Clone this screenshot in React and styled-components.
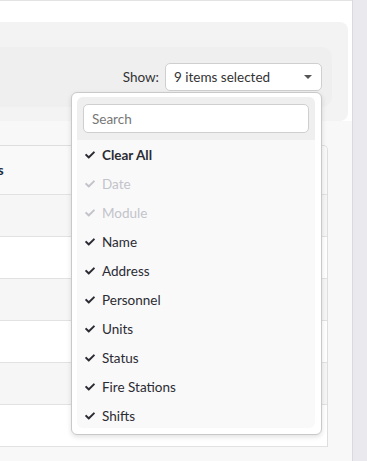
import React from 'react'
import styled, { createGlobalStyle } from 'styled-components'
import { FaCheck } from 'react-icons/fa'

const GlobalStyle = createGlobalStyle`
    html, body {
        margin: 0;
        padding: 0;
        background: #f8f8f8;
        font-family: Lato, "Open Sans", sans-serif;
        overflow: hidden;
    }
`

const Frame = styled.div`
    display: flex;
    height: 461px;
`

const Main = styled.div`
    flex: 1;
    display: flex;
    flex-direction: column;
    min-width: 0;
    border-top: 1px solid #e3e3e3;
`

const Scrollbar = styled.div`
    width: 14px;
    background: #e9e9ee;
    border-left: 1px solid #dadade;
`

const TopCard = styled.div`
    background: #fff;
    padding: 21px 4px 0 0;
`

const FilterPanel = styled.div`
    background: #f3f3f3;
    border-radius: 0 8px 8px 0;
    padding: 25px 16px 14px 0;
`

const Toolbar = styled.div`
    height: 60px;
    background: #efefef;
    border-radius: 0 10px 10px 0;
    display: flex;
    align-items: center;
    justify-content: flex-end;
    gap: 6px;
    padding-right: 10px;
`

const Label = styled.span`
    font-size: 13.5px;
    color: #333;
`

const SelectWrap = styled.div`
    position: relative;
`

const SelectBox = styled.div`
    box-sizing: border-box;
    width: 157px;
    height: 28px;
    background: #fff;
    border: 1px solid #cfcfcf;
    border-radius: 5px;
    display: flex;
    align-items: center;
    justify-content: space-between;
    padding: 0 9px 0 8px;
    font-size: 13.5px;
    color: #333;
`

const Caret = styled.span`
    width: 0;
    height: 0;
    border-left: 4px solid transparent;
    border-right: 4px solid transparent;
    border-top: 4px solid #555;
`

const Menu = styled.div`
    position: absolute;
    top: calc(100% + 1px);
    right: 0;
    width: 251px;
    box-sizing: border-box;
    background: #fff;
    border: 1px solid #c9c9c9;
    border-radius: 6px;
    box-shadow: 0 2px 5px rgba(0, 0, 0, 0.12);
    padding: 4px 6px 6px 5px;
    z-index: 10;
`

const MenuInner = styled.div`
    height: 331px;
    background: #f9f9f9;
    border-radius: 6px;
    overflow: hidden;
`

const SearchArea = styled.div`
    background: #efefef;
    padding: 7px 6px;
`

const SearchInput = styled.input`
    display: block;
    box-sizing: border-box;
    width: 100%;
    height: 29px;
    border: 1px solid #cfcfcf;
    border-radius: 5px;
    padding: 0 8px;
    font-family: Lato, sans-serif;
    font-size: 13.5px;
    color: #333;
    outline: none;
    &::placeholder {
        color: #777;
    }
`

const Item = styled.div`
    height: 29px;
    display: flex;
    align-items: center;
    gap: 7px;
    padding-left: 8px;
    font-size: 13.5px;
    font-weight: ${props => props.bold ? 700 : 400};
    color: ${props => props.disabled ? '#c3c3cb' : '#2b2b33'};
    svg {
        width: 10px;
        height: 10px;
        flex: none;
    }
`

const Content = styled.div`
    padding: 24px 24px 0 0;
    overflow: hidden;
`

const Table = styled.div`
    margin-left: -37px;
    border: 1px solid #dedede;
    border-bottom: none;
    border-radius: 5px 5px 0 0;
    overflow: hidden;
`

const Row = styled.div`
    height: ${props => props.head ? '48px' : '41px'};
    display: flex;
    align-items: center;
    padding-left: 8px;
    background: ${props => props.bg};
    border-bottom: 1px solid #e2e2e2;
    font-size: 13.5px;
    font-weight: 700;
    color: #1f2b3c;
`

const items = [
    { label: 'Clear All', bold: true },
    { label: 'Date', disabled: true },
    { label: 'Module', disabled: true },
    { label: 'Name' },
    { label: 'Address' },
    { label: 'Personnel' },
    { label: 'Units' },
    { label: 'Status' },
    { label: 'Fire Stations' },
    { label: 'Shifts' },
]

const rowColors = ['#f6f6f6', '#fff', '#f6f6f6', '#fff', '#f6f6f6']

const App = () => {
    return (
        <Frame>
            <GlobalStyle />
            <Main>
                <TopCard>
                    <FilterPanel>
                        <Toolbar>
                            <Label>Show:</Label>
                            <SelectWrap>
                                <SelectBox>
                                    <span>9 items selected</span>
                                    <Caret />
                                </SelectBox>
                                <Menu>
                                    <MenuInner>
                                        <SearchArea>
                                            <SearchInput placeholder="Search" />
                                        </SearchArea>
                                        {items.map(item => (
                                            <Item key={item.label} bold={item.bold} disabled={item.disabled}>
                                                <FaCheck />
                                                {item.label}
                                            </Item>
                                        ))}
                                    </MenuInner>
                                </Menu>
                            </SelectWrap>
                        </Toolbar>
                    </FilterPanel>
                </TopCard>
                <Content>
                    <Table>
                        <Row head bg="#f9f9f9">Units</Row>
                        {rowColors.map((c, i) => (
                            <Row key={i} bg={c} />
                        ))}
                        <Row bg="#fff" />
                    </Table>
                </Content>
            </Main>
            <Scrollbar />
        </Frame>
    )
}

export default App
